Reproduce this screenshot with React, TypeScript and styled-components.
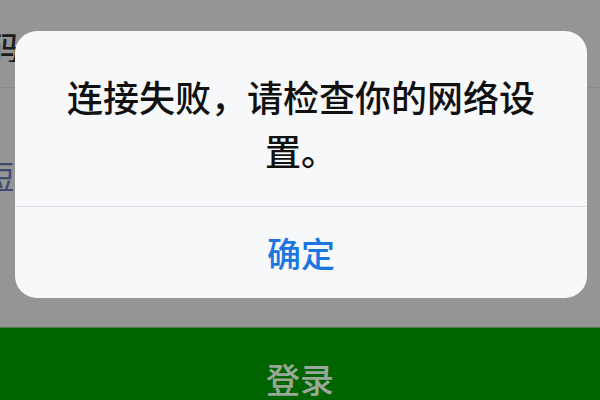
import styled, { createGlobalStyle } from "styled-components";

const GlobalStyle = createGlobalStyle`
  html, body {
    margin: 0;
    padding: 0;
    background: #959595;
  }
  body {
    font-family: "Noto Sans CJK SC", "Noto Sans", sans-serif;
  }
`;

const App = () => {
  return (
    <Screen>
      <GlobalStyle />
      <LoginPage>
        <FieldRow>
          <ClippedLabel $width={20}>
            <Label>密码</Label>
          </ClippedLabel>
        </FieldRow>
        <LinkRow>
          <ClippedLabel $width={14}>
            <LinkText>获取短</LinkText>
          </ClippedLabel>
        </LinkRow>
        <Spacer />
        <LoginButton>登录</LoginButton>
      </LoginPage>

      <AlertBox role="alertdialog">
        <AlertMessage>连接失败，请检查你的网络设置。</AlertMessage>
        <AlertAction>确定</AlertAction>
      </AlertBox>
    </Screen>
  );
};

export default App;

const Screen = styled.div`
  position: relative;
  width: 600px;
  height: 400px;
  overflow: hidden;
  background: #959595;
`;

const LoginPage = styled.div`
  display: flex;
  flex-direction: column;
  height: 100%;
`;

const FieldRow = styled.div`
  display: flex;
  align-items: center;
  height: 88px;
  padding-top: 4px;
  border-bottom: 1px solid #8a8a8a;
  box-sizing: border-box;
`;

const LinkRow = styled.div`
  display: flex;
  align-items: center;
  height: 174px;
`;

const ClippedLabel = styled.div<{ $width: number }>`
  width: ${(p) => p.$width}px;
  overflow: hidden;
  display: flex;
  justify-content: flex-end;
  white-space: nowrap;
`;

const Label = styled.span`
  font-size: 32px;
  line-height: 1;
  font-weight: 500;
  color: #1c1c1c;
`;

const LinkText = styled.span`
  font-size: 32px;
  line-height: 1;
  color: #3c4a6e;
`;

const Spacer = styled.div`
  flex: 1;
`;

const LoginButton = styled.div`
  height: 73px;
  display: flex;
  align-items: center;
  justify-content: center;
  background: #006500;
  border-top: 1px solid #4a7a4a;
  box-sizing: border-box;
  color: #9aa89a;
  font-size: 34px;
  line-height: 1;
  font-weight: 500;
  padding-top: 30px;
`;

const AlertBox = styled.div`
  position: absolute;
  left: 15px;
  top: 31px;
  width: 572px;
  height: 267px;
  border-radius: 22px;
  background: #f7f8f9;
  display: flex;
  flex-direction: column;
  overflow: hidden;
`;

const AlertMessage = styled.div`
  padding: 38px 40px 29px;
  font-size: 36px;
  line-height: 54px;
  font-weight: 500;
  color: #111;
  text-align: center;
  border-bottom: 1px solid #dcdce0;
`;

const AlertAction = styled.div`
  flex: 1;
  display: flex;
  align-items: center;
  justify-content: center;
  font-size: 34px;
  font-weight: 500;
  color: #1b76e0;
  cursor: pointer;
`;
